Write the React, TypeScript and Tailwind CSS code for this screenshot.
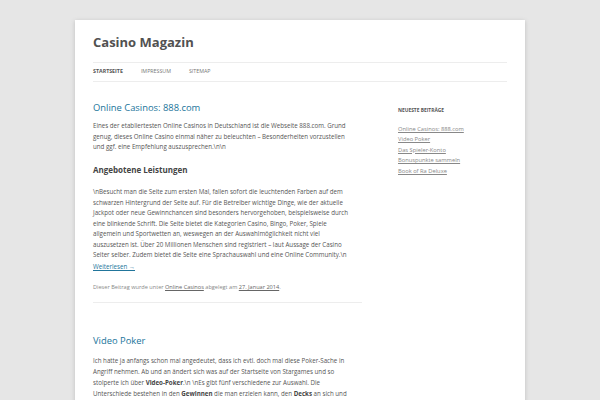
const recent = [
  "Online Casinos: 888.com",
  "Video Poker",
  "Das Spieler-Konto",
  "Bonuspunkte sammeln",
  "Book of Ra Deluxe",
];

const para1 = [
  "Eines der etabliertesten Online Casinos in Deutschland ist die Webseite 888.com. Grund",
  "genug, dieses Online Casino einmal näher zu beleuchten – Besonderheiten vorzustellen",
  "und ggf. eine Empfehlung auszusprechen.\\n\\n",
];

const para2 = [
  "\\nBesucht man die Seite zum ersten Mal, fallen sofort die leuchtenden Farben auf dem",
  "schwarzen Hintergrund der Seite auf. Für die Betreiber wichtige Dinge, wie der aktuelle",
  "Jackpot oder neue Gewinnchancen sind besonders hervorgehoben, beispielsweise durch",
  "eine blinkende Schrift. Die Seite bietet die Kategorien Casino, Bingo, Poker, Spiele",
  "allgemein und Sportwetten an, weswegen an der Auswahlmöglichkeit nicht viel",
  "auszusetzen ist. Über 20 Millionen Menschen sind registriert – laut Aussage der Casino",
  "Seiter selber. Zudem bietet die Seite eine Sprachauswahl und eine Online Community.\\n",
];

export default function App() {
  return (
    <div className="min-h-[400px] bg-[#e6e6e6] pt-[20px] font-['Open_Sans',sans-serif] text-[#555]">
      <div className="mx-auto w-[450px] bg-white px-[18px] pb-10 shadow-[0_1px_4px_rgba(100,100,100,0.3)]">
        {/* header */}
        <header className="pt-[14px]">
          <h1 className="text-[13px] font-bold leading-[16px] text-[#515151]">Casino Magazin</h1>
          <nav className="mt-[12px] flex h-[20px] items-center gap-[18px] border-y border-[#ededed] text-[5.3px] uppercase">
            <a className="font-bold text-[#555]">Startseite</a>
            <a className="text-[#777]">Impressum</a>
            <a className="text-[#777]">Sitemap</a>
          </nav>
        </header>

        <div className="flex gap-[36px]">
          {/* main */}
          <main className="w-[269px] shrink-0">
            <article className="border-b border-[#ededed] pb-[10px]">
              <h2 className="mt-[19px] text-[9.4px] leading-[14px] text-[#21759b]">Online Casinos: 888.com</h2>
              <p className="mt-[6px] whitespace-nowrap text-[6.2px] leading-[10.7px]">
                {para1.map((l, i) => (
                  <span key={i} className="block">{l}</span>
                ))}
              </p>
              <h3 className="mt-[11px] text-[8px] font-bold leading-[11px] text-[#444]">Angebotene Leistungen</h3>
              <p className="mt-[12px] whitespace-nowrap text-[6.2px] leading-[10.5px]">
                {para2.map((l, i) => (
                  <span key={i} className="block">{l}</span>
                ))}
                <a className="mt-[1px] block text-[#21759b] underline">Weiterlesen →</a>
              </p>
              <footer className="mt-[11px] text-[5.6px] leading-[9px] text-[#888]">
                Dieser Beitrag wurde unter <a className="text-[#666] underline">Online Casinos</a> abgelegt am{" "}
                <a className="text-[#666] underline">27. Januar 2014</a>.
              </footer>
            </article>

            <article>
              <h2 className="mt-[31px] text-[9.4px] leading-[14px] text-[#21759b]">Video Poker</h2>
              <p className="mt-[7px] whitespace-nowrap text-[6.2px] leading-[11px]">
                <span className="block">Ich hatte ja anfangs schon mal angedeutet, dass ich evtl. doch mal diese Poker-Sache in</span>
                <span className="block">Angriff nehmen. Ab und an ändert sich was auf der Startseite von Stargames und so</span>
                <span className="block">
                  stolperte ich über <strong className="text-[#444]">Video-Poker</strong>.\n \nEs gibt fünf verschiedene zur Auswahl. Die
                </span>
                <span className="block">
                  Unterschiede bestehen in den <strong className="text-[#444]">Gewinnen</strong> die man erzielen kann, den{" "}
                  <strong className="text-[#444]">Decks</strong> an sich und
                </span>
              </p>
            </article>
          </main>

          {/* sidebar */}
          <aside className="w-[109px]">
            <h3 className="mt-[24px] text-[4.9px] font-bold uppercase leading-[9px] text-[#555]">Neueste Beiträge</h3>
            <ul className="mt-[9px] text-[5.75px] leading-[10.4px] text-[#888]">
              {recent.map((r) => (
                <li key={r}>
                  <a className="underline">{r}</a>
                </li>
              ))}
            </ul>
          </aside>
        </div>
      </div>
    </div>
  );
}
